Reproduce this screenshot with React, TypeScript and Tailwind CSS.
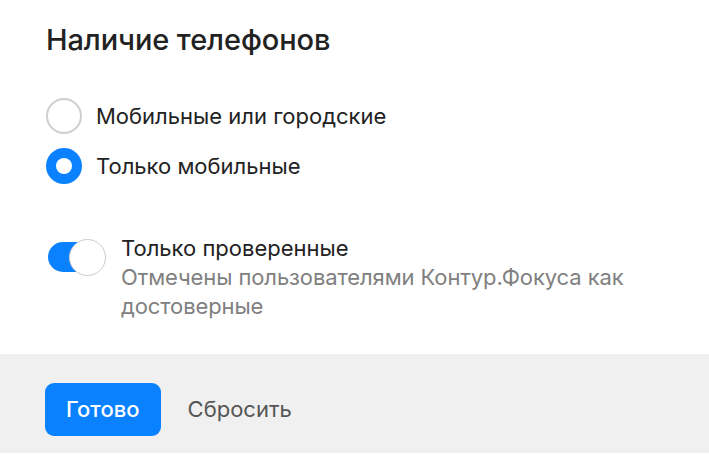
import React from "react";

export default function App() {
  return (
    <div
      className="w-full h-[454px] bg-white flex flex-col text-[#222]"
      style={{ fontFamily: "Inter, 'Noto Sans', sans-serif" }}
    >
      <div className="h-[354px] px-[46px] pt-[22px]">
        <h2 className="text-[29px] leading-[36px] font-medium tracking-[-0.1px]">Наличие телефонов</h2>
        <div className="mt-[40px] flex flex-col gap-[14px]">
          <label className="flex items-center gap-[14px]">
            <span className="w-[36px] h-[36px] rounded-full border-2 border-[#d0d0d0] bg-white shrink-0" />
            <span className="text-[22px] leading-[30px]">Мобильные или городские</span>
          </label>
          <label className="flex items-center gap-[14px]">
            <span className="w-[36px] h-[36px] rounded-full bg-[#0a82ff] flex items-center justify-center shrink-0">
              <span className="w-[16px] h-[16px] rounded-full bg-white" />
            </span>
            <span className="text-[22px] leading-[30px]">Только мобильные</span>
          </label>
        </div>
        <div className="mt-[49px] flex items-start">
          <div className="relative w-[58px] h-[38px] ml-[2px] mt-[6px] shrink-0">
            <span className="absolute left-0 top-[3px] w-[54px] h-[30px] rounded-full bg-[#0a82ff]" />
            <span className="absolute right-0 top-0 w-[37px] h-[37px] rounded-full bg-white border-[1.5px] border-[#cccccc]" />
          </div>
          <div className="ml-[15px] flex flex-col">
            <span className="text-[22px] leading-[30px]">Только проверенные</span>
            <span className="text-[22px] leading-[29px] tracking-[-0.1px] text-[#808080] max-w-[520px]">
              Отмечены пользователями Контур.Фокуса как достоверные
            </span>
          </div>
        </div>
      </div>
      <div className="h-[99px] bg-[#f0f0f0] flex items-start px-[45px] pt-[29px] gap-[27px]">
        <button className="h-[53px] px-[21px] rounded-[9px] bg-[#0a82ff] text-white text-[22px] font-medium">
          Готово
        </button>
        <button className="h-[53px] text-[22px] text-[#555]">Сбросить</button>
      </div>
    </div>
  );
}
